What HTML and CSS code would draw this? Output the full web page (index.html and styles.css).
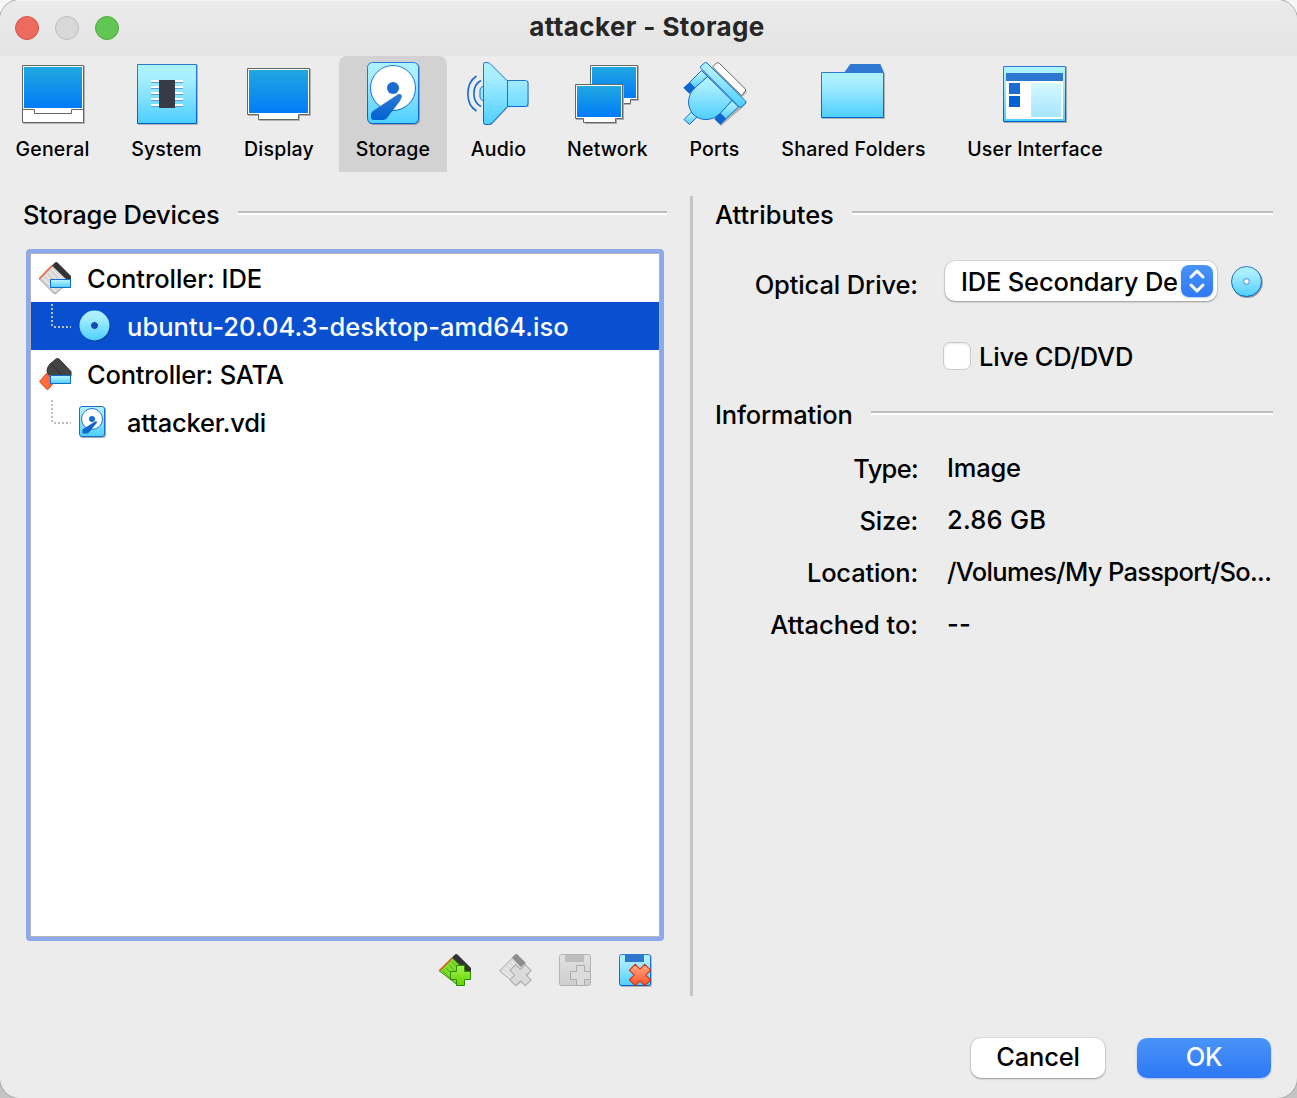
FILE: index.html
```html
<!DOCTYPE html>
<html lang="en">
<head>
<meta charset="utf-8">
<title>attacker - Storage</title>
<link rel="stylesheet" href="styles.css">
</head>
<body>
<svg class="defs" width="0" height="0">
  <defs>
    <linearGradient id="screen" x1="0" y1="0" x2="0" y2="1"><stop offset="0" stop-color="#21a8e0"/><stop offset="1" stop-color="#007cf8"/></linearGradient>
    <linearGradient id="cyan" x1="0" y1="0" x2="0" y2="1"><stop offset="0" stop-color="#aef3ff"/><stop offset=".25" stop-color="#a6edff"/><stop offset="1" stop-color="#4dcfff"/></linearGradient>
    <linearGradient id="edge" x1="0" y1="0" x2="0" y2="1"><stop offset="0" stop-color="#3079d2"/><stop offset="1" stop-color="#0062d2"/></linearGradient>
    <linearGradient id="pale" x1="0" y1="0" x2="0" y2="1"><stop offset="0" stop-color="#d6f8ff"/><stop offset="1" stop-color="#a5e6ff"/></linearGradient>
    <linearGradient id="green" x1="0" y1="0" x2="0" y2="1"><stop offset="0" stop-color="#a4f04c"/><stop offset="1" stop-color="#62d400"/></linearGradient>
    <linearGradient id="red" gradientUnits="userSpaceOnUse" x1="-8" y1="-8" x2="8" y2="8"><stop offset="0" stop-color="#ffb08c"/><stop offset="1" stop-color="#ff4a22"/></linearGradient>
    <linearGradient id="grey" x1="0" y1="0" x2="0" y2="1"><stop offset="0" stop-color="#e2e2e2"/><stop offset="1" stop-color="#cdcdcd"/></linearGradient>
  </defs>
</svg>
<div class="window">
  <header class="titlebar">
    <div class="lights"><i class="light close"></i><i class="light minimize"></i><i class="light zoom"></i></div>
    <h1 class="title">attacker - Storage</h1>
  </header>

  <nav class="toolbar">
    <a class="tool">
      <svg class="icon" width="65" height="64" viewBox="20 62 65 64">
        <path d="M23 66h62v58h-62z" fill="#b4b4b4"/>
        <path d="M22.500 65.500h61v57h-61z" fill="#fff" stroke="#666"/>
        <path d="M24 67h58v41h-58z" fill="url(#screen)"/>
        <path d="M22.500 109.500h12v4h37v-4h12" fill="none" stroke="#666"/>
      </svg>
      <span>General</span>
    </a>
    <a class="tool">
      <svg class="icon" width="65" height="64" viewBox="134 62 65 64">
        <path d="M138 65h60v60h-60z" fill="#b4b4b4"/>
        <path d="M137.500 64.500h59v59h-59z" fill="url(#cyan)" stroke="url(#edge)"/>
        <path d="M151 81h32M151 87h32M151 93h32M151 99h32M151 105h32" stroke="#fff" stroke-width="2"/>
        <path d="M151 82.500h32M151 88.500h32M151 94.500h32M151 100.500h32M151 106.500h32" stroke="#5a9fd6"/>
        <path d="M159 80h16v28h-16z" fill="#363b47"/>
      </svg>
      <span>System</span>
    </a>
    <a class="tool">
      <svg class="icon" width="66" height="64" viewBox="246 62 66 64">
        <path d="M248 69h63v47h-11v5h-41v-5h-11z" fill="#b4b4b4"/>
        <path d="M247.500 68.500h62v46h-11v5h-40v-5h-11z" fill="#fff" stroke="#666"/>
        <path d="M249 70h59v43h-59z" fill="url(#screen)"/>
      </svg>
      <span>Display</span>
    </a>
    <a class="tool active">
      <svg class="icon" width="66" height="64" viewBox="360 62 66 64">
        <rect x="368" y="63" width="52" height="62" rx="5" fill="#9c9c9c"/>
        <rect x="367.500" y="62.500" width="51" height="61" rx="5" fill="url(#cyan)" stroke="url(#edge)"/>
        <circle cx="393" cy="88" r="22.500" fill="#fff" stroke="url(#edge)"/>
        <circle cx="393" cy="88" r="6" fill="#1b6cd2"/>
        <path d="M398 94.200q4-1 4 2.300l-2 4.500-13 17q-1.500 2-4 2h-9q-3 0-3-3v-2q0-2.500 2-4z" fill="url(#edge)"/>
      </svg>
      <span>Storage</span>
    </a>
    <a class="tool">
      <svg class="icon" width="65" height="64" viewBox="466 62 65 64">
        <path d="M484.500 64h5l18 17h21v26h-20l-17 18h-7z" fill="#aaa"/>
        <path d="M483.500 86.500c-2 0-3.500 1.500-3.500 4v6c0 2.500 1.500 4 3.500 4" fill="#9fe8ff" stroke="#1669cf"/>
        <path d="M483.500 64q0-1.500 1.500-1.500h2q2 0 3.500 1.500l16.500 16.500h18.500q2.500 0 2.500 2.500v21q0 2.500-2.500 2.500h-18l-15 16q-2 2-4 2h-3q-2 0-2-2z" fill="url(#cyan)" stroke="url(#edge)"/>
        <path d="M507.500 81v25" stroke="#1c6fd1"/>
        <path d="M481 80.500c-9.500 5-9.500 21 0 26M476.500 76c-11.500 7.500-11.500 28 0 35" fill="none" stroke="#1669cf" stroke-width="1.600"/>
      </svg>
      <span>Audio</span>
    </a>
    <a class="tool">
      <svg class="icon" width="67" height="64" viewBox="574 62 67 64">
        <path d="M591 66h48v35h-8v4h-9z" fill="#b4b4b4"/>
        <path d="M590.500 65.500h47v34h-7v4h-40z" fill="#fff" stroke="#666"/>
        <path d="M592 67h44v31h-44z" fill="url(#screen)"/>
        <path d="M576 85h48v35h-7v4h-32v-4h-9z" fill="#aaa"/>
        <path d="M575.500 84.500h47v34h-7v4h-32v-4h-8z" fill="#fff" stroke="#666"/>
        <path d="M577 86h44v31h-44z" fill="url(#screen)"/>
      </svg>
      <span>Network</span>
    </a>
    <a class="tool">
      <svg class="icon" width="67" height="64" viewBox="681 62 67 64">
        <path d="M713 68l5-4 29 28-5 5zM702 69l45 34-6 6-20 17-6-6z" fill="#b4b4b4"/>
        <path d="M712.500 67l4-4q1.500-1 3 .5l25.500 25q1.500 1.500 0 3l-3.500 4z" fill="#fff" stroke="#666"/>
        <g fill="url(#cyan)" stroke="#1669cf">
          <path d="M684 119.500l7.500-7.500 5.500 5-7.500 7.500z"/>
          <path d="M689.500 82.500l12-12 6 6-12.500 12z"/>
          <path d="M732 100.500l6.500 6.500-13 12-5.500-6z"/>
          <path d="M707.500 76.500l24.500 24-12 13c-8 8-20 8-27 .5-6-7-6-17 .5-25z"/>
          <path d="M700.700 68q-.7-1 .3-2l3.500-3q1-1 2.500 0l38.500 38q1 1 0 2l-3.500 3.700q-1.500 1-3 0z"/>
        </g>
        <path d="M683.300 87.700l6.400-5.700 5.500 6-5.900 5.700zM714.300 119l5.900-6 6 6-5.500 5.700z" fill="#0f66d0"/>
      </svg>
      <span>Ports</span>
    </a>
    <a class="tool folders">
      <svg class="icon" width="67" height="64" viewBox="820 62 67 64">
        <path d="M822 73h63v46h-63z" fill="#b4b4b4"/>
        <path d="M844.300 72.500l6-8.500h30l3.700 8.500z" fill="#2f78d1"/>
        <path d="M821.500 72.500h62v45h-62z" fill="url(#cyan)" stroke="url(#edge)"/>
      </svg>
      <span>Shared Folders</span>
    </a>
    <a class="tool">
      <svg class="icon" width="66" height="64" viewBox="1002 62 66 64">
        <path d="M1004 67h63v56h-63z" fill="#aaa"/>
        <path d="M1003.500 66.500h62v55h-62z" fill="url(#cyan)" stroke="url(#edge)"/>
        <path d="M1006 81h57v38h-57z" fill="#fff"/>
        <path d="M1006 73h57v8h-57z" fill="#2f76cf"/>
        <path d="M1009 83h11v11h-11z" fill="#1a6dd2"/><path d="M1009 96h11v11h-11z" fill="#0463d2"/>
        <path d="M1031 83h30v34h-30z" fill="url(#pale)"/>
      </svg>
      <span>User Interface</span>
    </a>
  </nav>

  <main class="content">
    <section class="devices">
      <h2 class="group"><span>Storage Devices</span></h2>
      <ul class="tree">
        <li class="row controller">
          <svg width="34" height="34" viewBox="39 261 34 34">
            <path d="M39.500 279l13-13 18 14-14 13q-1.500 1-3 0z" fill="#d9d7d5" stroke="#9a9794"/>
            <path d="M43 278l13 13M46 275l14 14M49 272l14 14M52 269l14 14" stroke="#f7f7f7"/>
            <path d="M39 279l13-13.500" stroke="#f25c2a" stroke-width="1.300"/>
            <path d="M52 265.500l3-3q1.200-1 2.500 0l13.500 13.500v5h-3z" fill="#333"/>
            <path d="M50.500 279.500h20v8h-20z" fill="url(#cyan)" stroke="#1669cf"/>
          </svg>
          <span class="ide">Controller: IDE</span>
        </li>
        <li class="row device selected">
          <svg class="branch" width="20" height="24" viewBox="0 0 20 24"><path d="M1 0v23M3 23h17" /></svg>
          <svg class="media" width="32" height="32" viewBox="79 310 32 32">
            <circle cx="95.500" cy="326.500" r="15" fill="#063b9b"/>
            <circle cx="94.500" cy="325.500" r="15" fill="url(#cyan)"/>
            <circle cx="94.500" cy="325.500" r="3" fill="#174fb8" stroke="#0c4398"/>
          </svg>
          <span class="file">ubuntu-20.04.3-desktop-amd64.iso</span>
        </li>
        <li class="row controller">
          <svg width="34" height="34" viewBox="39 357 34 34">
            <path d="M39.500 381.500l7-8 8 8-6 7.500q-1 1-2 0z" fill="#ff6a3e" stroke="#d6441a"/>
            <path d="M47 371q0-4 3-7l6-5q1.500-1 3 0l12 12.500v4.500h-20l-3-2z" fill="#444" stroke="#303030"/>
            <path d="M52 365l11 11" stroke="#2b2b2b"/>
            <path d="M50.500 375.500h20v8h-20z" fill="url(#cyan)" stroke="#1669cf"/>
          </svg>
          <span>Controller: SATA</span>
        </li>
        <li class="row device">
          <svg class="branch" width="20" height="24" viewBox="0 0 20 24"><path d="M1 0v23M3 23h17" /></svg>
          <svg class="media" width="32" height="32" viewBox="79 406 32 32">
            <rect x="80" y="407" width="26" height="31" rx="3" fill="#aaa"/>
            <rect x="79.500" y="406.500" width="25" height="30" rx="2.500" fill="url(#cyan)" stroke="#1b6cd2"/>
            <circle cx="92" cy="419" r="10.500" fill="#fff" stroke="#2473d2"/>
            <circle cx="92" cy="419" r="3" fill="#1b6cd2"/>
            <path d="M95 421.500q2-1 2 1l-8 10q-1 1-2 1h-4.500v-4z" fill="#0f66d0"/>
          </svg>
          <span>attacker.vdi</span>
        </li>
      </ul>
      <div class="actions">
        <svg width="34" height="34" viewBox="438 953 34 34">
          <path d="M439.500 971l13-13 16 16-11 11z" fill="#7fdb28" stroke="#3c9a0c"/>
          <path d="M443 971l11 11M446 968l11 11M449 965l11 11M452 962l11 11" stroke="#4ba915" stroke-width=".8"/>
          <path d="M439 971l13-13" stroke="#ee4b20" stroke-width="1.300"/>
          <path d="M452 957.500l3-3q1-1 2.500 0l13.500 13.500v4h-4z" fill="#333"/>
          <path d="M456.500 965.500h8v6h6v8h-6v6h-8v-6h-6v-8h6z" fill="url(#green)" stroke="#2b8a06"/>
        </svg>
        <svg width="34" height="34" viewBox="498 953 34 34">
          <path d="M499.500 971l13-13 16 16-11 11z" fill="#dedede" stroke="#aaa"/>
          <path d="M503 971l11 11M506 968l11 11M509 965l11 11M512 962l11 11" stroke="#f4f4f4"/>
          <path d="M512 957.500l3-3q1-1 2.500 0l8.500 8.500-5 4z" fill="#8d8d8d"/>
          <path transform="translate(520.500 975.200) rotate(45) scale(1.04)" d="M-4-10.500h8v6.500h6.500v8h-6.500v6.500h-8v-6.500h-6.500v-8h6.500z" fill="#dadada" stroke="#adadad"/>
        </svg>
        <svg width="34" height="34" viewBox="558 953 34 34">
          <rect x="559.500" y="954.500" width="31" height="31" rx="2" fill="url(#grey)" stroke="#b4b4b4"/>
          <path d="M565 955h19v7h-19z" fill="#bdbdbd"/>
          <path d="M576.500 965.500h8v6h6v8h-6v6h-8v-6h-6v-8h6z" fill="#dcdcdc" stroke="#adadad"/>
        </svg>
        <svg width="34" height="34" viewBox="618 953 34 34">
          <rect x="620" y="955" width="32" height="32" rx="2" fill="#b4b4b4"/>
          <rect x="619.500" y="954.500" width="31" height="31" rx="2" fill="url(#cyan)" stroke="url(#edge)"/>
          <path d="M625 955h19v7h-19z" fill="#2f76cf"/>
          <path transform="translate(640 975) rotate(45) scale(1.04)" d="M-4-10.500h8v6.500h6.500v8h-6.500v6.500h-8v-6.500h-6.500v-8h6.500z" fill="url(#red)" stroke="#cf2f0c"/>
        </svg>
      </div>
    </section>

    <div class="divider"></div>

    <section class="details">
      <h2 class="group wide"><span>Attributes</span></h2>
      <div class="form attributes">
        <label class="label">Optical Drive:</label>
        <div class="field">
          <button class="select"><span class="select-text">IDE Secondary De</span>
            <svg class="stepper" width="32" height="32" viewBox="0 0 32 32"><path d="M10 12l6-6 6 6M10 20l6 6 6-6"/></svg>
          </button>
          <svg class="disc" width="33" height="33" viewBox="1230 265 33 33">
            <circle cx="1247.300" cy="282.500" r="15.500" fill="#999"/>
            <circle cx="1246.500" cy="281.500" r="15" fill="url(#cyan)" stroke="url(#edge)"/>
            <circle cx="1246.500" cy="281.500" r="2.800" fill="#fff" stroke="#3f86c9"/>
          </svg>
        </div>
        <label class="check"><i class="box"></i><span>Live CD/DVD</span></label>
      </div>
      <h2 class="group"><span>Information</span></h2>
      <dl class="form info">
        <dt class="label tight">Type:</dt><dd>Image</dd>
        <dt class="label">Size:</dt><dd class="loose">2.86 GB</dd>
        <dt class="label">Location:</dt><dd class="path">/Volumes/My Passport/So...</dd>
        <dt class="label wide">Attached to:</dt><dd class="loose">--</dd>
      </dl>
    </section>
  </main>

  <footer class="buttons">
    <button class="button">Cancel</button>
    <button class="button primary">OK</button>
  </footer>
</div>
</body>
</html>
```
FILE: styles.css
```css
* { box-sizing: border-box; }

body {
  margin: 0;
  width: 1297px;
  height: 1098px;
  overflow: hidden;
  background: linear-gradient(#f6f6f6 50%, #c4c4c4 50%);
  color: #000;
  font: 450 25.5px/32px Inter, "Liberation Sans", sans-serif;
  letter-spacing: -0.2px;
}

.defs { display: block; }
svg { display: block; flex: none; }
h1, h2, ul, dl, dd { margin: 0; padding: 0; }
.row, .tool, .group, .label, dd { white-space: nowrap; }

.window {
  display: flex;
  flex-direction: column;
  height: 1098px;
  border-radius: 20px;
  overflow: hidden;
  background: #ececec;
  box-shadow: 0 0 0 1px #a9a9a9;
}

/* Title bar */
.titlebar {
  display: grid;
  grid-template-columns: 150px 1fr 150px;
  align-items: center;
  height: 56px;
  background: linear-gradient(#ebebeb, #e4e4e4);
  box-shadow: inset 0 1px #f6f6f6;
}
.lights { display: flex; gap: 16px; padding-left: 15px; }
.light { width: 24px; height: 24px; border-radius: 50%; border: 1px solid; }
.close { background: #ed6a5f; border-color: #d75548; }
.minimize { background: #d8d8d8; border-color: #bcbcbc; }
.zoom { background: #62c655; border-color: #4fa940; }
.title {
  padding: 0 3px 2px 0;
  text-align: center;
  font-size: 26px;
  font-weight: 700;
  letter-spacing: 0.4px;
  color: #262626;
}

/* Category toolbar */
.toolbar {
  display: grid;
  grid-template-columns: 105px 123px 102px 126px 85px 133px 81px 197px 166px;
  height: 116px;
}
.tool {
  display: flex;
  flex-direction: column;
  align-items: center;
  gap: 8px;
  padding-top: 6px;
  font-size: 19.5px;
  font-weight: 500;
  line-height: 30px;
  letter-spacing: 0.2px;
}
.tool.folders { letter-spacing: 0.3px; }
.tool.active {
  width: 108px;
  margin: 0 9px;
  border-radius: 8px 8px 0 0;
  background: #d2d2d2;
}

/* Main area */
.content {
  display: grid;
  grid-template-columns: 645px 3px 558px;
  column-gap: 22px;
  padding: 24px 0 0 23px;
  height: 824px;
}
.devices { width: 644px; }
.divider { background: #c6c6c6; }

.group {
  display: flex;
  align-items: center;
  gap: 18px;
  height: 36px;
  font-size: inherit;
  font-weight: inherit;
}
.group span { padding-top: 2px; }
.group::after {
  content: "";
  flex: 1;
  height: 2px;
  margin-top: -2px;
  border-top: 2px solid #bdbdbd;
  background: #fff;
}

.tree {
  list-style: none;
  width: 638px;
  height: 692px;
  margin: 17px 0 0 3px;
  padding: 1px 1px 0;
  border: 4px solid #8caae9;
  border-radius: 4px;
  background: #fff;
  box-shadow: inset 0 0 0 1px #b0b4bc;
}
.row { display: flex; align-items: center; height: 48px; }
.row span { padding-top: 2px; }
.controller { padding-left: 8px; }
.controller svg { margin-right: 14px; }
.device { padding-left: 20px; }
.branch { align-self: flex-start; margin: 2px 8px 0 0; }
.branch path { fill: none; stroke: #bdbdbd; stroke-width: 2; stroke-dasharray: 2 2; }
.media { margin-right: 16px; }
.selected { background: #0950d0; color: #fff; }
.ide { letter-spacing: -0.05px; }
.file { letter-spacing: 0.06px; }

.actions {
  display: flex;
  justify-content: flex-end;
  gap: 26px;
  padding: 12px 15px 0 0;
}

/* Right column */
.form {
  display: grid;
  grid-template-columns: 203px 1fr;
  column-gap: 29px;
}
.label { text-align: right; }
.attributes { padding-top: 22px; height: 164px; grid-template-rows: 54px 1fr; }
.attributes .label { line-height: 62px; letter-spacing: -0.12px; }
.field { display: flex; align-items: center; height: 54px; margin-left: -2px; }
.select {
  display: flex;
  align-items: center;
  width: 272px;
  height: 40px;
  margin-right: 13px;
  padding: 0 4px 0 16px;
  border: 0;
  border-radius: 10px;
  background: #fff;
  box-shadow: 0 0 0 1px #00000012, 0 1px 2px #00000050;
  color: inherit;
  font: inherit;
  letter-spacing: -0.18px;
}
.select-text { width: 216px; padding-top: 1px; text-align: left; white-space: nowrap; }
.stepper { margin-left: 4px; border-radius: 8px; background: linear-gradient(#4994f8, #2e78f4); box-shadow: 0 1px 2px #2e78f460; }
.stepper path { fill: none; stroke: #fff; stroke-width: 3; stroke-linecap: round; stroke-linejoin: round; }
.check { grid-column: 2; display: flex; align-items: center; gap: 8px; height: 46px; margin: 25px 0 0 -4px; }
.check span { padding-top: 2px; }
.box { width: 28px; height: 28px; border: 1px solid #cacaca; border-radius: 7px; background: #fff; box-shadow: inset 0 1px 2px #0000001c; }

.info { grid-auto-rows: 52px; line-height: 52px; padding-top: 11px; }
.info dd { line-height: 50px; }
.wide { letter-spacing: -0.02px; }
.loose { letter-spacing: 0.25px; }
.tight { letter-spacing: -0.7px; }
.path { letter-spacing: -0.68px; }

/* Dialog buttons */
.buttons { display: flex; gap: 32px; justify-content: flex-end; padding: 42px 26px 0 0; }
.button {
  width: 134px;
  height: 40px;
  padding: 0 0 2px;
  border: 0;
  border-radius: 10px;
  background: #fff;
  box-shadow: 0 0 0 1px #00000010, 0 1px 2px #00000050;
  color: #000;
  font: inherit;
  letter-spacing: -0.2px;
}
.primary {
  background: linear-gradient(#4994f8, #2e78f4);
  box-shadow: 0 1px 2px #2e78f460;
  color: #fff;
}
```
